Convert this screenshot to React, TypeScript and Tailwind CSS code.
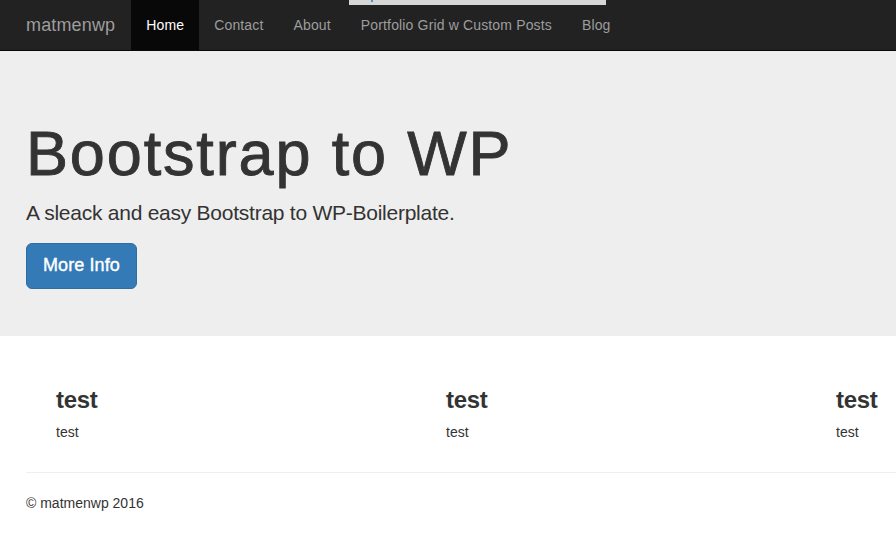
import React from "react";

export default function App() {
  const font = { fontFamily: '"Liberation Sans", Arial, sans-serif' };
  const navItems = ["Contact", "About", "Portfolio Grid w Custom Posts", "Blog"];
  return (
    <div className="relative min-h-[553px] bg-white text-[#333] overflow-hidden" style={font}>
      <nav className="relative h-[51px] bg-[#222] border-b border-[#080808] flex pl-[11px]">
        <a className="px-[15px] h-[50px] flex items-center text-[18px] leading-[20px] text-[#9d9d9d] tracking-[0.15px]">
          matmenwp
        </a>
        <ul className="flex ml-[1px] tracking-[0.15px]">
          <li className="h-[50px] px-[15px] flex items-center bg-[#080808] text-white text-[14px]">Home</li>
          {navItems.map((n) => (
            <li key={n} className="h-[50px] px-[15px] flex items-center text-[#9d9d9d] text-[14px]">
              {n}
            </li>
          ))}
        </ul>
        <div className="absolute top-0 left-[349px] w-[257px] h-[5px] bg-[#d6d6d6]">
          <div className="absolute top-0 left-[22px] w-[2px] h-[2px] bg-[#4a90d9]" />
        </div>
      </nav>

      <div className="bg-[#eee] pt-[48px] pb-[47px] px-[26px] mb-[30px]">
        <h1 className="mt-[20px] mb-[10px] text-[63px] leading-[1.1] font-medium text-[#333] tracking-[1.85px] [-webkit-text-stroke:0.9px_#333]">
          Bootstrap to WP
        </h1>
        <p className="text-[21px] leading-[30px] font-extralight mb-[15px] text-[#333] tracking-[-0.25px]">
          A sleack and easy Bootstrap to WP-Boilerplate.
        </p>
        <button className="h-[46px] px-[16px] rounded-[6px] bg-[#337ab7] border border-[#2e6da4] text-white text-[18px] leading-[1.33] tracking-[0.1px] [-webkit-text-stroke:0.4px_#fff]">
          More Info
        </button>
      </div>

      <div className="pl-[26px]">
        <div className="flex">
          {[0, 1, 2].map((i) => (
            <div key={i} className="w-[390px] shrink-0 pl-[30px]">
              <h3 className="mt-[21px] mb-[8px] text-[24px] leading-[1.1] font-bold tracking-[-0.3px]">test</h3>
              <p className="text-[14px] leading-[20px] mb-[10px]">test</p>
            </div>
          ))}
        </div>
        <hr className="mt-[20px] mb-[20px] border-0 border-t border-[#eee]" />
        <p className="text-[14px] leading-[20px]">© matmenwp 2016</p>
      </div>
    </div>
  );
}
